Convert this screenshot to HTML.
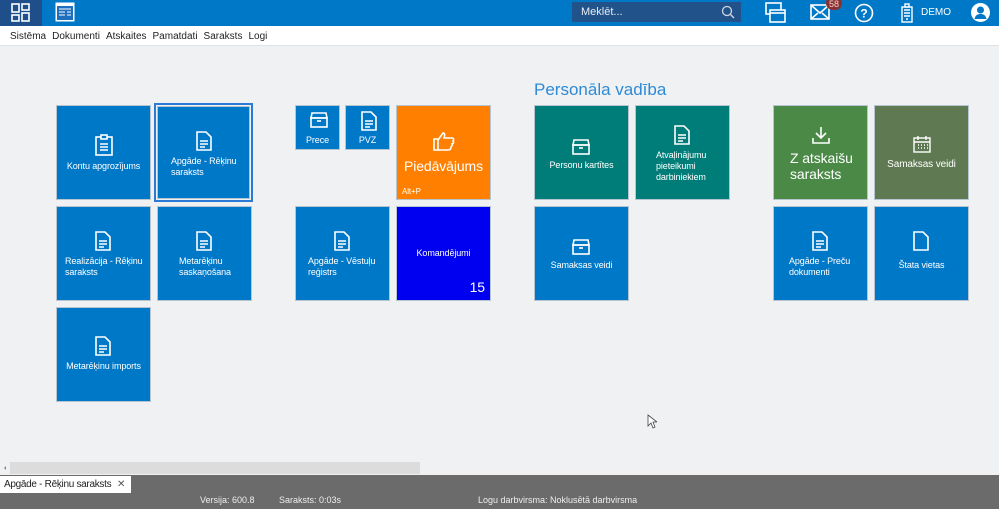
<!DOCTYPE html>
<html><head><meta charset="utf-8"><style>
*{margin:0;padding:0;box-sizing:border-box}
body{width:999px;height:509px;overflow:hidden;background:#f0f1f3;font-family:"Liberation Sans",sans-serif;position:relative}
.a{position:absolute}
.t{position:absolute;background:#0078c8;border:1px solid #b8c4cf;color:#fff;font-size:9px;line-height:11px;letter-spacing:-0.1px}
.t svg{position:absolute}
.c{position:absolute;left:0;right:0;text-align:center}
.l{position:absolute;left:10px;right:0;text-align:left}
.menu span{margin-right:6px}
</style></head><body>
<div class="a" style="left:0;top:0;width:999px;height:26px;background:#0078c8"></div>
<div class="a" style="left:0;top:0;width:42px;height:26px;background:#1f4f8a"></div>
<svg class="a" style="left:11px;top:3px" width="20" height="20" viewBox="0 0 20 20" fill="none" stroke="#fff" stroke-width="1.6"><rect x="1" y="1" width="7" height="8"/><rect x="1" y="12" width="7" height="6"/><rect x="11" y="1" width="7" height="6"/><rect x="11" y="10" width="7" height="8"/></svg>
<svg class="a" style="left:55px;top:2px" width="20" height="20" viewBox="0 0 20 20"><rect x="0.5" y="0.5" width="19" height="19" fill="#fff"/><rect x="2" y="4" width="16" height="14" fill="#1f6fbf"/><g stroke="#fff" stroke-width="1"><line x1="4" y1="7" x2="16" y2="7"/><line x1="4" y1="10" x2="10" y2="10"/><line x1="12" y1="10" x2="16" y2="10"/><line x1="4" y1="13" x2="10" y2="13"/><line x1="12" y1="13" x2="16" y2="13"/></g></svg>
<div class="a" style="left:572px;top:2px;width:169px;height:20px;background:#22528a;color:#e8eef5;font-size:11px;line-height:20px;padding-left:9px">Meklēt...</div>
<svg class="a" style="left:721px;top:5px" width="14" height="14" viewBox="0 0 14 14" fill="none" stroke="#cfd8e3" stroke-width="1.3"><circle cx="6" cy="6" r="4.5"/><line x1="9.5" y1="9.5" x2="13" y2="13"/></svg>
<svg class="a" style="left:765px;top:2px" width="22" height="22" viewBox="0 0 22 22" fill="none" stroke="#fff" stroke-width="1.6"><rect x="1" y="1" width="15" height="11"/><rect x="5" y="8" width="15" height="12" fill="#0078c8"/><line x1="5" y1="11" x2="20" y2="11"/></svg>
<svg class="a" style="left:810px;top:4px" width="20" height="16" viewBox="0 0 20 16" fill="none" stroke="#fff" stroke-width="1.6"><rect x="1" y="1" width="18" height="14"/><path d="M1 1l9 8 9-8M1 15l7-6M19 15l-7-6"/></svg>
<div class="a" style="left:826px;top:-4px;width:16px;height:14px;border-radius:7px;background:#8a3030;color:#f3d2d2;font-size:9px;text-align:center;line-height:16px">58</div>
<svg class="a" style="left:854px;top:3px" width="20" height="20" viewBox="0 0 20 20"><circle cx="10" cy="10" r="8.5" fill="none" stroke="#fff" stroke-width="1.6"/><text x="10" y="14.5" fill="#fff" font-size="12" font-family="Liberation Sans" text-anchor="middle" font-weight="bold">?</text></svg>
<svg class="a" style="left:900px;top:3px" width="14" height="20" viewBox="0 0 14 20" fill="none" stroke="#fff" stroke-width="1.4"><rect x="2" y="4" width="10" height="15"/><rect x="5" y="1" width="4" height="3"/><path d="M4 7h6M4 10h6M4 13h6M6 16h2"/></svg>
<div class="a" style="left:921px;top:7px;color:#fff;font-size:10px">DEMO</div>
<svg class="a" style="left:970px;top:2px" width="21" height="21" viewBox="0 0 21 21"><circle cx="10.5" cy="10.5" r="9.5" fill="#fff"/><circle cx="10.5" cy="8" r="3.5" fill="#0078c8"/><path d="M4.5 17c1-4 3-5 6-5s5 1 6 5z" fill="#0078c8"/></svg>
<div class="a menu" style="left:0;top:26px;width:999px;height:20px;background:#fff;border-bottom:1px solid #dfe2e5;font-size:10px;color:#222;line-height:21px;padding-left:10px"><span>Sistēma</span><span>Dokumenti</span><span>Atskaites</span><span>Pamatdati</span><span>Saraksts</span><span>Logi</span></div>

<div class="a" style="left:534px;top:80px;color:#2e8ad6;font-size:17px">Personāla vadība</div>

<div class="t" style="left:56px;top:105px;width:95px;height:95px"><svg style="left:38px;top:28px" width="18" height="22" viewBox="0 0 18 22" fill="none" stroke="#fff" stroke-width="1.6"><rect x="1" y="3" width="16" height="18"/><rect x="6" y="1" width="6" height="4" fill="#0078c8"/><path d="M5 10h8M5 13h8M5 16h8"/></svg><div class="c" style="top:55px">Kontu apgrozījums</div></div>
<div class="a" style="left:154px;top:103px;width:99px;height:99px;border:2px solid #2b7bd6"></div>
<div class="t" style="left:157px;top:106px;width:93px;height:93px"><svg style="left:38px;top:24px" width="16" height="20" viewBox="0 0 16 20" fill="none" stroke="#fff" stroke-width="1.6"><path d="M1 1h9l5 5v13H1z"/><path d="M4 10h8M4 13h8M4 16h5"/></svg><div class="l" style="top:49px;left:13px">Apgāde - Rēķinu saraksts</div></div>
<div class="t" style="left:56px;top:206px;width:95px;height:95px"><svg style="left:38px;top:24px" width="16" height="20" viewBox="0 0 16 20" fill="none" stroke="#fff" stroke-width="1.6"><path d="M1 1h9l5 5v13H1z"/><path d="M4 10h8M4 13h8M4 16h5"/></svg><div class="l" style="top:49px;left:8px">Realizācija - Rēķinu saraksts</div></div>
<div class="t" style="left:157px;top:206px;width:95px;height:95px"><svg style="left:38px;top:24px" width="16" height="20" viewBox="0 0 16 20" fill="none" stroke="#fff" stroke-width="1.6"><path d="M1 1h9l5 5v13H1z"/><path d="M4 10h8M4 13h8M4 16h5"/></svg><div class="l" style="top:49px;left:21px">Metarēķinu saskaņošana</div></div>
<div class="t" style="left:56px;top:307px;width:95px;height:95px"><svg style="left:38px;top:28px" width="16" height="20" viewBox="0 0 16 20" fill="none" stroke="#fff" stroke-width="1.6"><path d="M1 1h9l5 5v13H1z"/><path d="M4 10h8M4 13h8M4 16h5"/></svg><div class="c" style="top:53px">Metarēķinu imports</div></div>

<div class="t" style="left:295px;top:105px;width:45px;height:45px"><svg style="left:14px;top:6px" width="18" height="16" viewBox="0 0 18 16" fill="none" stroke="#fff" stroke-width="1.6"><path d="M2 1h14l1 5H1z"/><rect x="1" y="6" width="16" height="9"/><path d="M7 9h4"/></svg><div class="c" style="top:29px">Prece</div></div>
<div class="t" style="left:345px;top:105px;width:45px;height:45px"><svg style="left:15px;top:5px" width="16" height="20" viewBox="0 0 16 20" fill="none" stroke="#fff" stroke-width="1.6"><path d="M1 1h9l5 5v13H1z"/><path d="M4 10h8M4 13h8M4 16h5"/></svg><div class="c" style="top:29px">PVZ</div></div>
<div class="t" style="left:396px;top:105px;width:95px;height:95px;background:#ff8000"><svg style="left:36px;top:25px" width="22" height="20" viewBox="0 0 22 20" fill="none" stroke="#fff" stroke-width="1.6"><rect x="1" y="8" width="4" height="11"/><path d="M5 9l5-7c2 0 2 2 1 5h8c2 0 2 2 1 3 1 1 1 2-1 3 1 1 0 2-1 3 0 2-1 3-3 3H5"/></svg><div class="c" style="top:52px;font-size:14px;line-height:16px">Piedāvājums</div><div class="a" style="left:5px;top:80px;font-size:8px">Alt+P</div></div>
<div class="t" style="left:295px;top:206px;width:95px;height:95px"><svg style="left:38px;top:24px" width="16" height="20" viewBox="0 0 16 20" fill="none" stroke="#fff" stroke-width="1.6"><path d="M1 1h9l5 5v13H1z"/><path d="M4 10h8M4 13h8M4 16h5"/></svg><div class="l" style="top:49px;left:12px">Apgāde - Vēstuļu reģistrs</div></div>
<div class="t" style="left:396px;top:206px;width:95px;height:95px;background:#0000f0"><div class="c" style="top:41px">Komandējumi</div><div class="a" style="right:5px;top:72px;font-size:14px;line-height:16px">15</div></div>

<div class="t" style="left:534px;top:105px;width:95px;height:95px;background:#007d78"><svg style="left:37px;top:33px" width="18" height="16" viewBox="0 0 18 16" fill="none" stroke="#fff" stroke-width="1.6"><path d="M2 1h14l1 5H1z"/><rect x="1" y="6" width="16" height="9"/><path d="M7 9h4"/></svg><div class="c" style="top:54px">Personu kartītes</div></div>
<div class="t" style="left:635px;top:105px;width:95px;height:95px;background:#007d78"><svg style="left:38px;top:19px" width="16" height="20" viewBox="0 0 16 20" fill="none" stroke="#fff" stroke-width="1.6"><path d="M1 1h9l5 5v13H1z"/><path d="M4 10h8M4 13h8M4 16h5"/></svg><div class="l" style="top:44px;left:20px">Atvaļinājumu pieteikumi darbiniekiem</div></div>
<div class="t" style="left:534px;top:206px;width:95px;height:95px"><svg style="left:37px;top:32px" width="18" height="16" viewBox="0 0 18 16" fill="none" stroke="#fff" stroke-width="1.6"><path d="M2 1h14l1 5H1z"/><rect x="1" y="6" width="16" height="9"/><path d="M7 9h4"/></svg><div class="c" style="top:53px">Samaksas veidi</div></div>
<div class="t" style="left:773px;top:105px;width:95px;height:95px;background:#4a8a46"><svg style="left:38px;top:20px" width="18" height="18" viewBox="0 0 18 18" fill="none" stroke="#fff" stroke-width="1.6"><path d="M9 1v11M4 7l5 5 5-5M1 12v5h16v-5"/></svg><div class="l" style="top:44px;left:16px;font-size:14px;line-height:16px">Z atskaišu saraksts</div></div>
<div class="t" style="left:874px;top:105px;width:95px;height:95px;background:#5f7a52"><svg style="left:38px;top:29px" width="18" height="18" viewBox="0 0 18 18" fill="none" stroke="#fff" stroke-width="1.4"><rect x="1" y="3" width="16" height="14"/><path d="M5 1v4M13 1v4M1 7h16"/><path d="M5 10h1M8 10h1M11 10h1M14 10h1M5 13h1M8 13h1M11 13h1M14 13h1" stroke-width="1.5"/></svg><div class="c" style="top:53px;font-size:10px">Samaksas veidi</div></div>
<div class="t" style="left:773px;top:206px;width:95px;height:95px"><svg style="left:38px;top:24px" width="16" height="20" viewBox="0 0 16 20" fill="none" stroke="#fff" stroke-width="1.6"><path d="M1 1h9l5 5v13H1z"/><path d="M4 10h8M4 13h8M4 16h5"/></svg><div class="l" style="top:49px;left:15px">Apgāde - Preču dokumenti</div></div>
<div class="t" style="left:874px;top:206px;width:95px;height:95px"><svg style="left:38px;top:24px" width="16" height="20" viewBox="0 0 16 20" fill="none" stroke="#fff" stroke-width="1.6"><path d="M1 1h9l5 5v13H1z"/></svg><div class="c" style="top:53px">Štata vietas</div></div>

<svg class="a" style="left:647px;top:414px" width="10" height="15" viewBox="0 0 10 15"><path d="M1 1v11l3-3 2 5 2-1-2-5h4z" fill="#fff" stroke="#444" stroke-width="0.8"/></svg>

<div class="a" style="left:0;top:461px;width:999px;height:14px;background:#f0f1f3"></div>
<div class="a" style="left:2px;top:466px;width:0;height:0;border:2px solid transparent;border-right-color:#888"></div>
<div class="a" style="left:10px;top:462px;width:410px;height:12px;background:#dcdcdc"></div>
<div class="a" style="left:0;top:475px;width:999px;height:34px;background:#6b6b6b"></div>
<div class="a" style="left:0;top:476px;width:131px;height:17px;background:#fff;font-size:10px;line-height:17px;padding-left:4px;color:#222;white-space:nowrap;letter-spacing:-0.3px">Apgāde - Rēķinu saraksts<span style="position:absolute;left:117px;color:#555">✕</span></div>
<div class="a" style="left:200px;top:495px;color:#eee;font-size:9px">Versija: 600.8</div>
<div class="a" style="left:279px;top:495px;color:#eee;font-size:9px">Saraksts: 0:03s</div>
<div class="a" style="left:478px;top:495px;color:#eee;font-size:9px">Logu darbvirsma: Noklusētā darbvirsma</div>
</body></html>
